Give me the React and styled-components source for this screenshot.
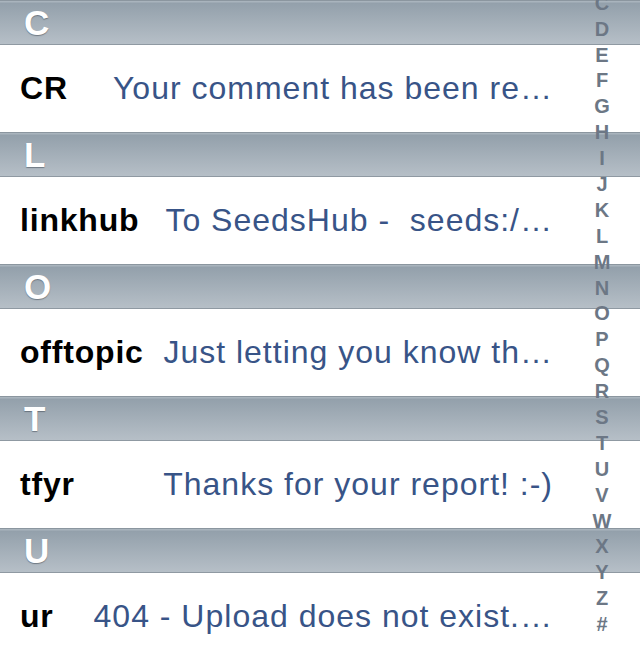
import React from 'react';
import styled, { createGlobalStyle } from 'styled-components';

const GlobalStyle = createGlobalStyle`
  html, body {
    margin: 0;
    padding: 0;
    background: #ffffff;
  }
  body {
    font-family: 'Liberation Sans', Helvetica, Arial, sans-serif;
    -webkit-font-smoothing: antialiased;
  }
`;

const StyledTable = styled.div`
  position: relative;
  width: 640px;
  height: 656px;
  overflow: hidden;
  background: #ffffff;
  display: flex;
  flex-direction: column;
`;

const SectionHeader = styled.div`
  flex: none;
  height: 43px;
  border-top: 1px solid #8b969f;
  border-bottom: 1px solid #8f99a2;
  background: linear-gradient(to bottom, #a9b4bd 0px, #a9b4bd 1px, #93a0ab 2px, #b6bfc7 100%);
  display: flex;
  align-items: center;
  padding-left: 24px;
  color: #ffffff;
  font-size: 35px;
  font-weight: bold;
  text-shadow: 0 1px 1px rgba(60, 70, 80, 0.55);
`;

const Row = styled.div`
  flex: none;
  height: 87px;
  display: flex;
  align-items: center;
  padding: 0 87px 0 20px;
  background: #ffffff;
`;

const Label = styled.span`
  flex: none;
  font-size: 32px;
  font-weight: bold;
  letter-spacing: 0.8px;
  color: #000000;
  margin-right: 14px;
`;

const Detail = styled.span`
  flex: 1;
  min-width: 0;
  text-align: right;
  white-space: pre;
  overflow: hidden;
  font-size: 32px;
  letter-spacing: 1px;
  color: #385487;
`;

const Index = styled.div`
  position: absolute;
  top: -61px;
  left: 584px;
  width: 36px;
  display: flex;
  flex-direction: column;
  align-items: center;
`;

const IndexLetter = styled.span`
  height: 25.9px;
  line-height: 25.9px;
  font-size: 20px;
  font-weight: bold;
  color: #6c7785;
`;

const sections = [
  { letter: 'C', label: 'CR', detail: 'Your comment has been re…' },
  { letter: 'L', label: 'linkhub', detail: 'To SeedsHub -  seeds:/…' },
  { letter: 'O', label: 'offtopic', detail: 'Just letting you know th…' },
  { letter: 'T', label: 'tfyr', detail: 'Thanks for your report! :-)' },
  { letter: 'U', label: 'ur', detail: '404 - Upload does not exist.…' },
];

const indexLetters = 'ABCDEFGHIJKLMNOPQRSTUVWXYZ#'.split('');

export default function App() {
  return (
    <>
      <GlobalStyle />
      <StyledTable>
        {sections.map((s) => (
          <React.Fragment key={s.letter}>
            <SectionHeader>{s.letter}</SectionHeader>
            <Row>
              <Label>{s.label}</Label>
              <Detail>{s.detail}</Detail>
            </Row>
          </React.Fragment>
        ))}
        <Index>
          {indexLetters.map((l) => (
            <IndexLetter key={l}>{l}</IndexLetter>
          ))}
        </Index>
      </StyledTable>
    </>
  );
}
